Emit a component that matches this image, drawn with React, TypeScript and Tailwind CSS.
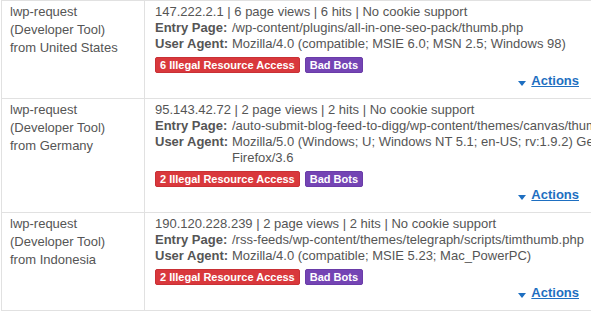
import React from "react";

type Row = {
  country: string;
  ip: string;
  views: number;
  hits: number;
  entry: string;
  ua: string;
  illegal: number;
};

const rows: Row[] = [
  {
    country: "United States",
    ip: "147.222.2.1",
    views: 6,
    hits: 6,
    entry: "/wp-content/plugins/all-in-one-seo-pack/thumb.php",
    ua: "Mozilla/4.0 (compatible; MSIE 6.0; MSN 2.5; Windows 98)",
    illegal: 6,
  },
  {
    country: "Germany",
    ip: "95.143.42.72",
    views: 2,
    hits: 2,
    entry: "/auto-submit-blog-feed-to-digg/wp-content/themes/canvas/thumb.php",
    ua: "Mozilla/5.0 (Windows; U; Windows NT 5.1; en-US; rv:1.9.2) Gecko/20100115 Firefox/3.6",
    illegal: 2,
  },
  {
    country: "Indonesia",
    ip: "190.120.228.239",
    views: 2,
    hits: 2,
    entry: "/rss-feeds/wp-content/themes/telegraph/scripts/timthumb.php",
    ua: "Mozilla/4.0 (compatible; MSIE 5.23; Mac_PowerPC)",
    illegal: 2,
  },
];

export default function App() {
  return (
    <div
      className="w-[591px] h-[313px] overflow-hidden bg-white text-[13px] text-[#555]"
      style={{ fontFamily: '"Liberation Sans", Arial, sans-serif' }}
    >
      <div className="ml-px border-l border-t border-[#e1e1e1] w-[720px]">
        {rows.map((r, i) => (
          <div key={i} className="flex border-b border-[#e1e1e1]">
            <div className="w-[143px] shrink-0 border-r border-[#e1e1e1] pl-[8px] pt-[2px] leading-[18px]">
              <div>lwp-request</div>
              <div>(Developer Tool)</div>
              <div>from {r.country}</div>
            </div>
            <div className="flex-1 min-w-0 pl-[10px] pt-[3px] pb-[9px] leading-[16px]">
              <div className="whitespace-nowrap">
                {r.ip} | {r.views} page views | {r.hits} hits | No cookie support
              </div>
              <div className="w-[527px] grid grid-cols-[77px_1fr]">
                <div className="font-bold whitespace-nowrap">Entry Page:</div>
                <div className="whitespace-nowrap">{r.entry}</div>
                <div className="font-bold whitespace-nowrap">User Agent:</div>
                <div>{r.ua}</div>
              </div>
              <div className="flex gap-[5px] mt-[5px]">
                <span className="h-[16px] leading-[15px] px-[4px] rounded-[2px] bg-[#d9383c] border border-[#c93035] text-white font-bold text-[11px] whitespace-nowrap">
                  {r.illegal} Illegal Resource Access
                </span>
                <span className="h-[16px] leading-[15px] px-[4px] rounded-[2px] bg-[#7444b4] border border-[#6a3ca8] text-white font-bold text-[11px] whitespace-nowrap">
                  Bad Bots
                </span>
              </div>
              <div className="w-[424px] flex justify-end items-center gap-[5px]">
                <svg width="8" height="5" viewBox="0 0 8 5" className="mt-[4px]">
                  <path d="M0 0 H8 L4 5 Z" fill="#1e6fc1" />
                </svg>
                <a href="#" className="font-bold text-[#1e6fc1] underline">
                  Actions
                </a>
              </div>
            </div>
          </div>
        ))}
      </div>
    </div>
  );
}
